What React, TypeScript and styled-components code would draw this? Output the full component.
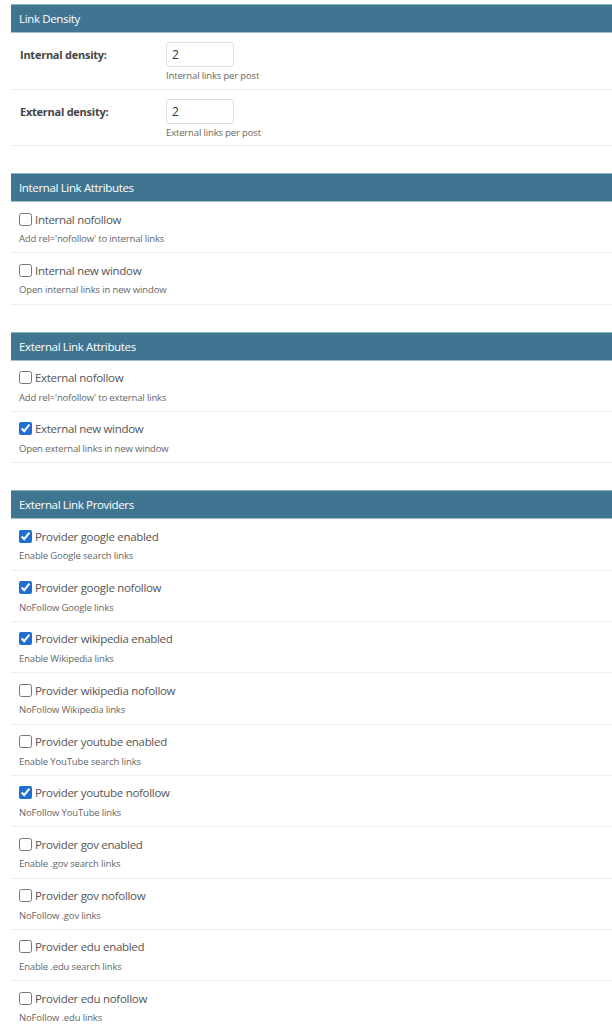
import React from "react";
import styled, { createGlobalStyle } from "styled-components";

const Global = createGlobalStyle`
  html, body { margin: 0; padding: 0; background: #fff; }
  body { font-family: "Open Sans", "Noto Sans", sans-serif; }
  * { box-sizing: border-box; }
`;

const Page = styled.div`
  padding: 4px 0 0 11px;
  display: flex;
  flex-direction: column;
  gap: 27px;
`;

const Section = styled.section`
  display: flex;
  flex-direction: column;
`;

const Header = styled.div`
  height: 29px;
  background: #3f7591;
  border-top: 1px solid #8fb3c6;
  border-bottom: 1px solid #9fc0d0;
  color: #fff;
  font-size: 11.5px;
  letter-spacing: -0.35px;
  padding-left: 8px;
  display: flex;
  align-items: center;
`;

const DensityRow = styled.div`
  display: grid;
  grid-template-columns: 146px 1fr;
  padding: 9px 0 6.5px 9px;
  border-bottom: 1px solid #eee;
`;

const Label = styled.label`
  font-weight: 700;
  font-size: 11px;
  letter-spacing: -0.25px;
  color: #444;
  padding-top: 5px;
`;

const FieldCol = styled.div`
  display: flex;
  flex-direction: column;
  gap: 2px;
`;

const NumberInput = styled.input`
  width: 68px;
  height: 25px;
  border: 1px solid #ddd;
  border-radius: 3px;
  padding: 0 5px;
  font-family: inherit;
  font-size: 12px;
  color: #333;
  outline: none;
`;

const Help = styled.div`
  font-size: 9.5px;
  letter-spacing: -0.15px;
  color: #666;
  line-height: 13px;
`;

const CheckRow = styled.div`
  display: flex;
  flex-direction: column;
  gap: 5px;
  padding: 9px 0 7.33px 8px;
  border-bottom: 1px solid #eee;
`;

const CheckLabel = styled.label`
  display: flex;
  align-items: center;
  gap: 3px;
  height: 16px;
  font-size: 11.5px;
  letter-spacing: -0.3px;
  color: #555;
`;

const Box = styled.input`
  width: 13px;
  height: 13px;
  margin: 0;
  accent-color: #1f6fd3;
`;

type Check = { title: string; help: string; on: boolean };

const sections: { title: string; items: Check[] }[] = [
  {
    title: "Internal Link Attributes",
    items: [
      { title: "Internal nofollow", help: "Add rel='nofollow' to internal links", on: false },
      { title: "Internal new window", help: "Open internal links in new window", on: false },
    ],
  },
  {
    title: "External Link Attributes",
    items: [
      { title: "External nofollow", help: "Add rel='nofollow' to external links", on: false },
      { title: "External new window", help: "Open external links in new window", on: true },
    ],
  },
  {
    title: "External Link Providers",
    items: [
      { title: "Provider google enabled", help: "Enable Google search links", on: true },
      { title: "Provider google nofollow", help: "NoFollow Google links", on: true },
      { title: "Provider wikipedia enabled", help: "Enable Wikipedia links", on: true },
      { title: "Provider wikipedia nofollow", help: "NoFollow Wikipedia links", on: false },
      { title: "Provider youtube enabled", help: "Enable YouTube search links", on: false },
      { title: "Provider youtube nofollow", help: "NoFollow YouTube links", on: true },
      { title: "Provider gov enabled", help: "Enable .gov search links", on: false },
      { title: "Provider gov nofollow", help: "NoFollow .gov links", on: false },
      { title: "Provider edu enabled", help: "Enable .edu search links", on: false },
      { title: "Provider edu nofollow", help: "NoFollow .edu links", on: false },
    ],
  },
];

export default function App() {
  return (
    <>
      <Global />
      <Page>
        <Section>
          <Header>Link Density</Header>
          <DensityRow>
            <Label>Internal density:</Label>
            <FieldCol>
              <NumberInput type="text" defaultValue="2" />
              <Help>Internal links per post</Help>
            </FieldCol>
          </DensityRow>
          <DensityRow>
            <Label>External density:</Label>
            <FieldCol>
              <NumberInput type="text" defaultValue="2" />
              <Help>External links per post</Help>
            </FieldCol>
          </DensityRow>
        </Section>
        {sections.map((s) => (
          <Section key={s.title}>
            <Header>{s.title}</Header>
            {s.items.map((it) => (
              <CheckRow key={it.title}>
                <CheckLabel>
                  <Box type="checkbox" defaultChecked={it.on} />
                  {it.title}
                </CheckLabel>
                <Help>{it.help}</Help>
              </CheckRow>
            ))}
          </Section>
        ))}
      </Page>
    </>
  );
}
